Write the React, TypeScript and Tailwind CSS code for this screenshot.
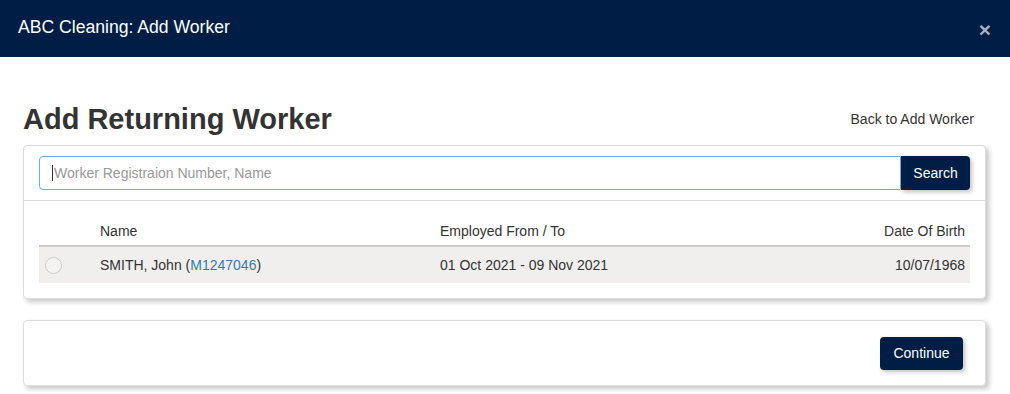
import React from "react";

export default function App() {
  return (
    <div className="w-[1010px] h-[394px] bg-white font-['Liberation_Sans',Arial,sans-serif] text-[#333] overflow-hidden">
      <div className="h-[57px] bg-[#001e45] flex items-center justify-between pl-[18px] pr-[19px]">
        <div className="text-white text-[17.6px] leading-none -mt-[1px]">ABC Cleaning: Add Worker</div>
        <div className="text-[#a7afbd] text-[21px] font-bold leading-none mt-[1px]">×</div>
      </div>
      <div className="px-[23px] pr-[24px]">
        <div className="flex items-end justify-between mt-[42px] h-[36px]">
          <h1 className="text-[29px] font-bold leading-none text-[#333] mb-[1px]">Add Returning Worker</h1>
          <a className="text-[14px] text-[#333] mr-[12px] mb-[5px]">Back to Add Worker</a>
        </div>
        <div className="mt-[10px] border border-[#ddd] rounded-[4px] bg-white shadow-[3px_3px_5px_rgba(0,0,0,0.22)]">
          <div className="px-[15px] pt-[10px] pb-[10px] border-b border-[#ddd]">
            <div className="flex h-[34px]">
              <div className="flex-1 border border-[#66afe9] rounded-l-[4px] flex items-center pl-[12px] text-[14px] text-[#999]">
                <span className="border-l border-[#333] pl-[1px] leading-[16px]">Worker Registraion Number, Name</span>
              </div>
              <button className="w-[69px] bg-[#001e45] text-white text-[14px] rounded-r-[4px] shadow-[2px_2px_4px_rgba(0,0,0,0.25)]">Search</button>
            </div>
          </div>
          <div className="px-[15px] pt-[20px] pb-[15px]">
            <div className="flex h-[26px] items-start text-[14px] border-b-2 border-[#ccc]">
              <div className="w-[61px]" />
              <div className="w-[340px]">Name</div>
              <div className="flex-1">Employed From / To</div>
              <div className="pr-[5px]">Date Of Birth</div>
            </div>
            <div className="flex h-[36px] items-center text-[14px] bg-[#f0efee]">
              <div className="w-[61px] pl-[6px]">
                <div className="w-[17px] h-[17px] rounded-full border border-[#ccc] bg-[#f3f3f3]" />
              </div>
              <div className="w-[340px]">
                SMITH, John (<span className="text-[#337ab7]">M1247046</span>)
              </div>
              <div className="flex-1">01 Oct 2021 - 09 Nov 2021</div>
              <div className="pr-[5px]">10/07/1968</div>
            </div>
          </div>
        </div>
        <div className="mt-[21px] h-[66px] border border-[#ddd] rounded-[4px] bg-white shadow-[3px_3px_5px_rgba(0,0,0,0.22)] flex items-center justify-end pr-[22px]">
          <button className="w-[83px] h-[33px] bg-[#001e45] text-white text-[14px] rounded-[4px] shadow-[2px_2px_4px_rgba(0,0,0,0.25)]">Continue</button>
        </div>
      </div>
    </div>
  );
}
